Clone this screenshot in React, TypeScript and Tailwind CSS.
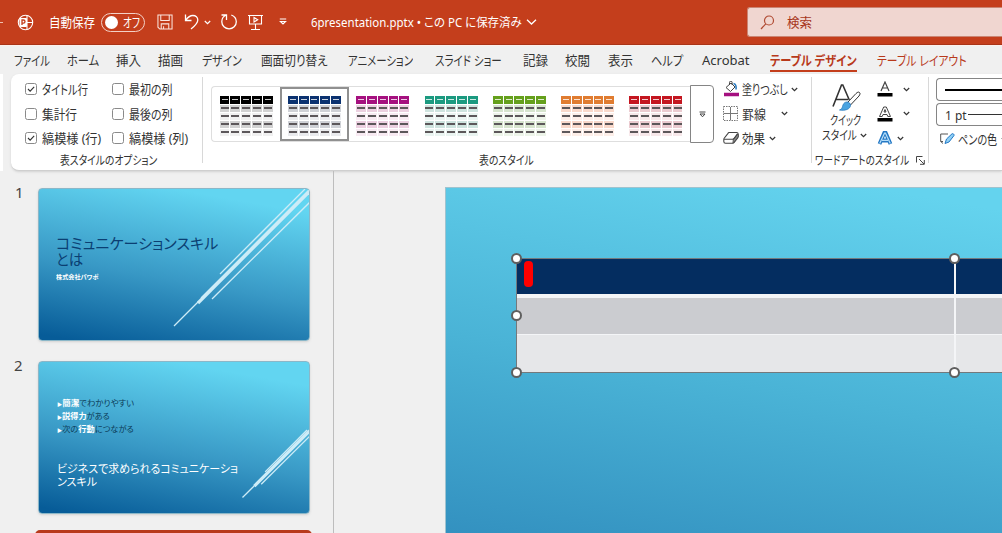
import { useLayoutEffect, useRef, type ReactNode } from "react";

const tabs = [
  { name: "ファイル", width: 36, gap: "ml-[14px]" },
  { name: "ホーム", width: 32, gap: "ml-[17px]" },
  { name: "挿入", width: 25, gap: "ml-[17px]" },
  { name: "描画", width: 25, gap: "ml-[17px]" },
  { name: "デザイン", width: 40, gap: "ml-[19px]" },
  { name: "画面切り替え", width: 67, gap: "ml-[19px]" },
  { name: "アニメーション", width: 65, gap: "ml-[20px]" },
  { name: "スライド ショー", width: 67, gap: "ml-[22px]" },
  { name: "記録", width: 25, gap: "ml-[21px]" },
  { name: "校閲", width: 25, gap: "ml-[17px]" },
  { name: "表示", width: 25, gap: "ml-[18px]" },
  { name: "ヘルプ", width: 32, gap: "ml-[18px]" },
  { name: "Acrobat", width: 48, gap: "ml-[19px]" },
];

const tableStyles = [
  { name: "black", head: "bg-black", band: "bg-[#d2d2d2]", plain: "bg-[#f0f0f0]" },
  { name: "navy", head: "bg-[#0b3270]", band: "bg-[#cfd1d6]", plain: "bg-[#eaebee]" },
  { name: "magenta", head: "bg-[#a5107f]", band: "bg-[#ecd0e0]", plain: "bg-[#f8eaf2]" },
  { name: "teal", head: "bg-[#1b9a80]", band: "bg-[#cfe4df]", plain: "bg-[#eaf4f1]" },
  { name: "green", head: "bg-[#65a01c]", band: "bg-[#d7e5ce]", plain: "bg-[#edf4e9]" },
  { name: "orange", head: "bg-[#e07c30]", band: "bg-[#f9d9cb]", plain: "bg-[#fdeee8]" },
  { name: "red", head: "bg-[#c41620]", band: "bg-[#ebcbd0]", plain: "bg-[#f7e8ea]" },
];

const options = [
  { name: "タイトル行", width: 46, checked: true },
  { name: "最初の列", width: 44, checked: false },
  { name: "集計行", width: 35, checked: false },
  { name: "最後の列", width: 44, checked: false },
  { name: "縞模様 (行)", width: 59, checked: true },
  { name: "縞模様 (列)", width: 59, checked: false },
];

// Condenses a single line of text to the given width
function Fit({
  width,
  className = "",
  children,
}: {
  width: number;
  className?: string;
  children: ReactNode;
}) {
  const ref = useRef<HTMLSpanElement>(null);

  useLayoutEffect(() => {
    const el = ref.current;
    if (el) el.style.transform = `scaleX(${width / el.offsetWidth})`;
  }, [width]);

  return (
    <span className={`flex shrink-0 whitespace-nowrap ${className}`} style={{ width }}>
      <span ref={ref} className="block shrink-0 origin-left">
        {children}
      </span>
    </span>
  );
}

function Chevron({ className = "" }: { className?: string }) {
  return (
    <svg className={`h-[5px] w-[7px] shrink-0 ${className}`} viewBox="0 0 7 5" fill="none" stroke="currentColor" strokeWidth="1.2">
      <path d="M.8 1 3.5 3.6 6.2 1" />
    </svg>
  );
}

function TitleBar() {
  return (
    <header className="flex h-[45px] items-center overflow-hidden border-b border-[#a93417] bg-[#c43e1c] text-[13px] text-white">
      <div className="h-px w-[3px] shrink-0 bg-[#f0c0b0]" />
      <svg className="ml-[14px] h-[17px] w-[17px] shrink-0" viewBox="0 0 17 17" fill="none" stroke="#fff" strokeWidth="1.1">
        <circle cx="8.500" cy="8.500" r="7.200" />
        <path d="M10 1.500v14M10 8.500h6" />
        <rect x="2.500" y="4" width="7.500" height="9" rx="1" fill="#fff" stroke="none" />
        <path d="M5 11V6h1.400a1.500 1.500 0 0 1 0 3.200H5" stroke="#c43e1c" strokeWidth="1.300" />
      </svg>
      <Fit width={46} className="ml-[15px]">自動保存</Fit>
      <div className="ml-[6px] flex h-[19px] w-[44px] shrink-0 items-center rounded-full border border-[#f3d0c6] pl-[3px]">
        <div className="h-[13px] w-[13px] shrink-0 rounded-full bg-white" />
        <Fit width={17} className="ml-[5px]">オフ</Fit>
      </div>
      <svg className="ml-[12px] h-[16px] w-[16px] shrink-0" viewBox="0 0 17 17" fill="none" stroke="#fbe6df" strokeWidth="1.1">
        <path d="M1 1h15v15H3l-2-2zM4 1v6h9V1M4.500 16v-5.500h8V16M7 16v-3" />
      </svg>
      <svg className="ml-[11px] h-[18px] w-[16px] shrink-0" viewBox="0 0 16 18" fill="none" stroke="#fff" strokeWidth="1.3">
        <path d="M1.500 1.500v6h6M1.700 7.300C4 4 6.200 2.500 8.800 2.500c3 0 5 2 5 4.500 0 3.500-3 6-6.800 9" />
      </svg>
      <Chevron className="ml-[4px]" />
      <svg className="ml-[9px] h-[18px] w-[18px] shrink-0" viewBox="0 0 18 18" fill="none" stroke="#fff" strokeWidth="1.3">
        <path d="M1.500 2h5v5M11.300 2c3.200 1.200 5 3.600 5 6.800 0 4-3.200 7-7.200 7s-7.300-3-7.300-7c0-3.300 2-5.900 4.700-6.800" />
      </svg>
      <svg className="ml-[9px] h-[17px] w-[17px] shrink-0" viewBox="0 0 17 17" fill="none" stroke="#fff" strokeWidth="1.1">
        <path d="M1 1.500h15M2.500 1.500v8.500h12V1.500M8.500 10v5.500M4 15.500h9" />
        <path d="M7 3.500v4.500l3.700-2.200z" />
      </svg>
      <svg className="ml-[15px] h-[8px] w-[8px] shrink-0" viewBox="0 0 8 8" fill="none" stroke="#fff" strokeWidth="1.2">
        <path d="M.8 1h6.400M1.500 3.500 4 6l2.500-2.500z" />
      </svg>
      <Fit width={211} className="mt-[2px] ml-[24px] text-[12.500px]">6presentation.pptx • この PC に保存済み</Fit>
      <svg className="ml-[4px] h-[6px] w-[11px] shrink-0" viewBox="0 0 11 6" fill="none" stroke="#fff" strokeWidth="1.3">
        <path d="M1 .8 5.500 5 10 .8" />
      </svg>
      <div className="ml-auto flex h-[30px] w-[255px] shrink-0 items-center rounded-l-[3px] border border-r-0 border-[#cb8573] bg-[#f0d6d0] text-[#a7361c]">
        <svg className="ml-[12px] h-[15px] w-[15px]" viewBox="0 0 15 15" fill="none" stroke="#b04a32" strokeWidth="1.2">
          <circle cx="9" cy="5.500" r="4.500" />
          <path d="M5.800 8.800 1 14" />
        </svg>
        <Fit width={25} className="ml-[12px]">検索</Fit>
      </div>
    </header>
  );
}

function TabRow() {
  return (
    <nav className="flex h-[29px] items-center border-t border-[#fbf0ec] text-[13px] text-[#333]">
      {tabs.map((tab) => (
        <Fit key={tab.name} width={tab.width} className={tab.gap}>
          {tab.name}
        </Fit>
      ))}
      <div className="mt-[2px] ml-[20px] flex h-[22px] items-center border-b-2 border-[#c43e1c] font-semibold text-[#b8391b]">
        <Fit width={87}>テーブル デザイン</Fit>
      </div>
      <Fit width={90} className="ml-[20px] text-[#b8391b]">テーブル レイアウト</Fit>
    </nav>
  );
}

function StyleOptions() {
  return (
    <section className="flex h-[86px] w-[192px] shrink-0 flex-col border-r border-[#d8d8d8]">
      <div className="grid grid-cols-[87px_1fr] pl-[14px]">
        {options.map((option) => (
          <div key={option.name} className="flex h-[24.600px] items-center">
            <span className="flex h-[12px] w-[12px] items-center justify-center rounded-[2.500px] border border-[#8a8a8a]">
              {option.checked && (
                <svg className="h-[6px] w-[8px]" viewBox="0 0 9 7" fill="none" stroke="#333" strokeWidth="1.300">
                  <path d="M1 3.500 3.500 6 8.200 1" />
                </svg>
              )}
            </span>
            <Fit width={option.width} className="ml-[5px]">{option.name}</Fit>
          </div>
        ))}
      </div>
      <Fit width={97} className="mt-px ml-[49px] text-[12px]">表スタイルのオプション</Fit>
    </section>
  );
}

function TablePreview({ head, band, plain }: { head: string; band: string; plain: string }) {
  const columns = [0, 1, 2, 3, 4];
  return (
    <div className="mt-[3px] flex w-[53px] flex-col gap-px">
      <div className="flex gap-px">
        {columns.map((c) => (
          <div key={c} className={`flex h-[8px] flex-1 items-center justify-center ${head}`}>
            <div className="h-px w-[6px] bg-white/80" />
          </div>
        ))}
      </div>
      {[band, plain, band, plain].map((fill, r) => (
        <div key={r} className="flex gap-px">
          {columns.map((c) => (
            <div key={c} className={`flex h-[7px] flex-1 items-center justify-center ${fill}`}>
              <div className="h-[2px] w-[8px] bg-[#5c575a]" />
            </div>
          ))}
        </div>
      ))}
    </div>
  );
}

function StyleGallery() {
  return (
    <section className="flex h-[86px] w-[505px] shrink-0 flex-col pt-[8px] pl-[8px]">
      <div className="flex h-[58px] items-center">
        <div className="flex h-[56px] w-[481px] items-center rounded-l-[4px] border border-r-0 border-[#dedede]">
          {tableStyles.map((style) => (
            <div
              key={style.name}
              className={`flex h-[54px] w-[68.300px] shrink-0 items-center justify-center border-2 ${
                style.name === "navy" ? "border-[#909090]" : "border-transparent"
              }`}
            >
              <TablePreview head={style.head} band={style.band} plain={style.plain} />
            </div>
          ))}
        </div>
        <div className="flex h-[58px] w-[24px] shrink-0 items-center justify-center rounded-r-[4px] border border-[#858585] text-[#444]">
          <svg className="h-[7px] w-[7px]" viewBox="0 0 7 7" fill="none" stroke="currentColor">
            <path d="M.5 1h6M1 3h5L3.500 5.800z" />
          </svg>
        </div>
      </div>
      <Fit width={55} className="mt-[9px] ml-[268px] text-[12px]">表のスタイル</Fit>
    </section>
  );
}

function Shading() {
  return (
    <section className="flex h-[86px] w-[104px] shrink-0 flex-col border-r border-[#d8d8d8] pl-[15px]">
      <div className="flex h-[24.600px] items-center">
        <svg className="h-[16px] w-[16px]" viewBox="0 0 16 16" fill="none" stroke="#444">
          <path d="M3 6.500 8 2l4 4-4.500 4.500zM6.500 4V1.500a1.300 1.300 0 0 1 2.600 0V4" />
          <path d="M10.500 2.500c2 .5 3 2.500 2.500 6" stroke="#2b7cc0" strokeWidth="1.600" />
          <path d="M1 13.500h15" stroke="#a5107f" strokeWidth="3.500" />
        </svg>
        <Fit width={46} className="ml-[3px]">塗りつぶし</Fit>
        <Chevron className="ml-[3px]" />
      </div>
      <div className="flex h-[24.600px] items-center">
        <svg className="h-[15px] w-[15px]" viewBox="0 0 15 15" fill="none" stroke="#777">
          <path d="M.5.5h14v14H.5z" strokeDasharray="1.500 1" />
          <path d="M7.500 1v13M1 7.500h13" />
        </svg>
        <Fit width={24} className="ml-[4px]">罫線</Fit>
        <Chevron className="ml-[15px]" />
      </div>
      <div className="flex h-[24.600px] items-center">
        <svg className="h-[12px] w-[16px]" viewBox="0 0 16 12" fill="#fff" stroke="#444" strokeWidth="1.100" strokeLinejoin="round">
          <path d="M1 6.500 5 1.300c.3-.5.800-.8 1.400-.8h7c1 0 1.800.8 1.800 1.800v2.200c0 .6-.2 1-.5 1.500l-3.500 4.400c-.4.500-.9.800-1.600.8h-7C1.600 11.200.8 10.400.8 9.400V7.500z" />
          <path d="M10.300 7.500 14.500 2c.5.300.7.700.7 1.300v1.500l-4.300 5.600c-.3.400-.6.600-1 .7z" fill="#8a8a8a" strokeWidth=".8" />
          <path d="M1 7.300h8.500c.6 0 1-.2 1.400-.7l3.600-4.700" fill="none" />
        </svg>
        <Fit width={23} className="ml-[3px]">効果</Fit>
        <Chevron className="ml-[4px]" />
      </div>
    </section>
  );
}

function WordArt() {
  return (
    <section className="flex h-[86px] w-[117px] shrink-0 flex-col border-r border-[#d8d8d8]">
      <div className="flex h-[74px] pl-[10px]">
        <div className="flex w-[55px] flex-col pt-[7px] leading-[14.500px]">
          <svg className="ml-[10px] h-[28px] w-[30px]" viewBox="0 0 30 28" fill="none" stroke="#333" strokeWidth="1.600">
            <path d="M1 22.500 9.500 1h1.300l6.500 15M4 15.500h12" />
            <path d="M27.500 8.500c1 .8.500 2-.5 3.500l-8.500 9-3-2.500 8.500-9c1.300-1.200 2.500-1.900 3.500-1z" fill="#fff" strokeWidth="1" />
            <path d="M15 18c2 0 3.700 1.500 3.500 3.500-.3 3.500-5 5.500-11 4.500 3-1 2.500-2.500 3.500-5 .7-2 2.300-3 4-3z" fill="#4aa3e0" stroke="#2b7cc0" strokeWidth=".8" />
          </svg>
          <Fit width={31} className="mt-[2px] ml-[8px] text-[12.500px]">クイック</Fit>
          <div className="flex items-center">
            <Fit width={35} className="text-[12.500px]">スタイル</Fit>
            <Chevron className="ml-[3px]" />
          </div>
        </div>
        <div className="flex flex-col">
          <div className="flex h-[24.600px] items-center">
            <svg className="h-[16px] w-[16px]" viewBox="0 0 16 16" fill="none" stroke="#444" strokeWidth="1.200">
              <path d="M4 10 8 1l4 9M5.500 7h5" />
              <path d="M.5 13.700h15" stroke="#000" strokeWidth="3.500" />
            </svg>
            <Chevron className="ml-[10px]" />
          </div>
          <div className="flex h-[24.600px] items-center">
            <svg className="h-[16px] w-[16px]" viewBox="0 0 16 16" fill="none" stroke="#444">
              <path d="M2.500 10.500 6.700 1h2.600l4.200 9.500h-2.700L10 8.500H6l-.8 2zM7 6h2L8 3.500z" />
              <path d="M.5 13.700h15" stroke="#000" strokeWidth="3.500" />
            </svg>
            <Chevron className="ml-[10px]" />
          </div>
          <div className="flex h-[24.600px] items-center">
            <svg className="h-[15px] w-[16px]" viewBox="0 0 16 15" fill="none">
              <path d="M2.500 13 7.300 1.800h1.400L13.500 13M5 9.500h6" stroke="#2478c4" strokeWidth="3.800" />
              <path d="M2.700 12.600 7.500 2.200h1l4.800 10.400M5 9.300h6" stroke="#b5defa" strokeWidth="1.200" />
            </svg>
            <Chevron className="ml-[4px]" />
          </div>
        </div>
      </div>
      <div className="mt-px flex items-center pl-[3px]">
        <Fit width={94} className="text-[12px]">ワードアートのスタイル</Fit>
        <svg className="ml-[7px] h-[9px] w-[9px]" viewBox="0 0 9 9" fill="none" stroke="#444">
          <path d="M.5 6.500v-6h6M3 3l5 5M8.300 4v4.300H4" />
        </svg>
      </div>
    </section>
  );
}

function PenSettings() {
  return (
    <section className="flex min-w-0 flex-1 flex-col overflow-hidden pt-px pl-[7px]">
      <div className="flex h-[23px] shrink-0 items-center rounded-l-[4px] border border-r-0 border-[#858585] pl-[8px]">
        <div className="h-[2px] flex-1 bg-black" />
      </div>
      <div className="mt-[2px] flex h-[23px] shrink-0 items-center rounded-l-[4px] border border-r-0 border-[#858585] pl-[8px]">
        <Fit width={22}>1 pt</Fit>
        <div className="ml-px h-px flex-1 bg-[#333]" />
      </div>
      <div className="flex h-[26px] items-center pl-[4px]">
        <svg className="h-[12px] w-[15px] shrink-0" viewBox="0 0 15 12" fill="none" stroke="#555">
          <path d="M8 1H.7v7.500H3M.7 8.500 3 10.500" />
          <path d="M5 10.500 6.500 6 12 .8c1.200-.5 2.300.5 2 1.700L9 9z" fill="#8fd0f5" stroke="#2478c4" />
        </svg>
        <Fit width={39} className="ml-[3px]">ペンの色</Fit>
        <Chevron className="ml-[4px]" />
      </div>
    </section>
  );
}

function Ribbon() {
  return (
    <div className="flex h-[97px] gap-[8px]">
      <div className="w-[3px] shrink-0 bg-white" />
      <div className="flex min-w-0 flex-1 overflow-hidden rounded-l-[8px] border-b border-[#cfcfcf] bg-white pt-[3px] text-[13px] text-[#333] shadow">
        <StyleOptions />
        <StyleGallery />
        <Shading />
        <WordArt />
        <PenSettings />
      </div>
    </div>
  );
}

const streaks = [
  { d: "M1 137 25 113", width: 1.3 },
  { d: "M47 85 132 0", width: 1.3 },
  { d: "M25 114 137 2", width: 3.2 },
  { d: "M28 109 137 0", width: 1.3 },
  { d: "M39 110 137 13", width: 1.3 },
];

function Streaks({ className }: { className: string }) {
  return (
    <svg className={className} viewBox="0 0 136 138" fill="none" stroke="#cdecf7">
      {streaks.map((line) => (
        <path key={line.d} d={line.d} strokeWidth={line.width} vectorEffect="non-scaling-stroke" />
      ))}
    </svg>
  );
}

function SlideList() {
  return (
    <aside className="flex w-[334px] shrink-0 flex-col gap-[20px] border-r border-[#bdbdbd] pt-[17px] text-[#444]">
      <div className="flex h-[153px] shrink-0">
        <span className="w-[38px] pl-[15px] text-[15px] leading-[9px]">1</span>
        <div className="relative w-[272px] overflow-hidden rounded-[4px] border border-[#8bb7c8] bg-[linear-gradient(190deg,#62d5f1_12%,#3898c5_58%,#075c98_97%)] pt-[46px] pl-[17px] shadow-sm">
          <div className="text-[15px] leading-[16px] text-[#0b3f73]">
            <Fit width={162}>コミュニケーションスキル</Fit>
            <Fit width={27}>とは</Fit>
          </div>
          <Fit width={42} className="mt-[4px] text-[6px] leading-[12px] font-bold text-white">株式会社パワポ</Fit>
          <Streaks className="absolute top-0 right-0 h-[138px] w-[136px]" />
        </div>
      </div>
      <div className="flex h-[153px] shrink-0">
        <span className="w-[38px] pl-[14px] text-[15px] leading-[9px]">2</span>
        <div className="relative w-[272px] overflow-hidden rounded-[4px] border border-[#8bb7c8] bg-[linear-gradient(190deg,#62d5f1_12%,#3898c5_58%,#075c98_97%)] pt-[34px] pl-[18px] shadow-sm">
          <div className="text-[8px] leading-[13px] text-[#0c3c58]">
            <Fit width={77} className="h-[13px]">
              <span className="text-[5px] text-white">▶</span>
              <b className="text-white">簡潔</b>でわかりやすい
            </Fit>
            <Fit width={53} className="h-[13px]">
              <span className="text-[5px] text-white">▶</span>
              <b className="text-white">説得力</b>がある
            </Fit>
            <Fit width={77} className="h-[13px]">
              <span className="text-[5px] text-white">▶</span>次の
              <b className="text-white">行動</b>につながる
            </Fit>
          </div>
          <div className="mt-[28px] text-[11px] leading-[12.500px] text-white">
            <Fit width={181}>ビジネスで求められるコミュニケーショ</Fit>
            <Fit width={40}>ンスキル</Fit>
          </div>
          <Streaks className="absolute right-0 bottom-[13px] h-[72px] w-[67px]" />
        </div>
      </div>
      <div className="-mt-[4px] flex h-[153px] shrink-0">
        <span className="w-[35px] pl-[14px] text-[15px] leading-[15px] text-[#c43e1c]">3</span>
        <div className="w-[277px] rounded-[5px] bg-[#b83a1c]" />
      </div>
    </aside>
  );
}

function Handle({ className }: { className: string }) {
  return (
    <span className={`absolute h-[11px] w-[11px] rounded-full border-2 border-[#5f5f5f] bg-white ${className}`} />
  );
}

function Canvas() {
  return (
    <main className="min-w-0 flex-1 overflow-hidden pt-[16px] pl-[111px]">
      <div className="h-full border-t border-l border-[#9fc3cf] bg-[linear-gradient(190deg,#64d3ee_5%,#4ab3d6_55%,#3391c0_100%)] pt-[70px] pl-[70px]">
        <div className="relative h-[115px] border-y border-l border-[#73797c]">
          <div className="grid grid-cols-[437px_1fr] gap-x-[2px] bg-[#f4f5f7]">
            <div className="h-[35px] bg-[#042d60]" />
            <div className="h-[35px] bg-[#042d60]" />
            <div className="mt-[4px] h-[36px] bg-[#cbccd0]" />
            <div className="mt-[4px] h-[36px] bg-[#cbccd0]" />
            <div className="mt-px h-[37px] bg-[#e6e7e9]" />
            <div className="mt-px h-[37px] bg-[#e6e7e9]" />
          </div>
          <div className="absolute top-[2px] left-[7px] h-[26px] w-[9px] rounded-[4px] bg-[#ff0000]" />
          <Handle className="top-[-6px] left-[-6px]" />
          <Handle className="top-[51px] left-[-6px]" />
          <Handle className="top-[108px] left-[-6px]" />
          <Handle className="top-[-6px] left-[432px]" />
          <Handle className="top-[108px] left-[432px]" />
        </div>
      </div>
    </main>
  );
}

export default function App() {
  return (
    <div className="flex h-[533px] w-[1002px] flex-col overflow-hidden bg-[#f0f0f0] font-['Noto_Sans','Noto_Sans_CJK_JP',sans-serif] leading-[18px] [font-feature-settings:'palt']">
      <TitleBar />
      <TabRow />
      <Ribbon />
      <div className="flex min-h-0 flex-1">
        <SlideList />
        <Canvas />
      </div>
    </div>
  );
}
